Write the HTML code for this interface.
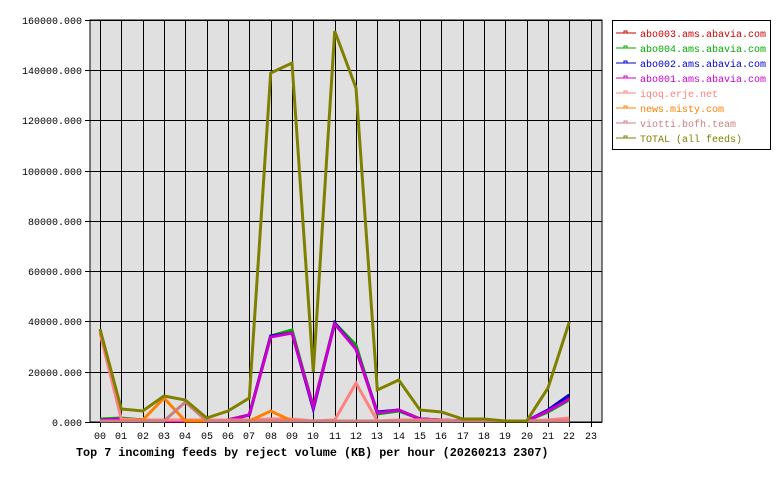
<!DOCTYPE html>
<html><head><meta charset="utf-8"><style>
html,body{margin:0;padding:0;background:#fff;width:780px;height:480px;overflow:hidden}
svg text{font-family:"Liberation Mono","DejaVu Sans Mono",monospace}
</style></head><body>
<svg width="780" height="480" xmlns="http://www.w3.org/2000/svg">
<rect x="90" y="20" width="512" height="402" fill="#e0e0e0" stroke="#000" stroke-width="1"/>
<g stroke="#000" stroke-width="1" shape-rendering="crispEdges">
<line x1="85" y1="20.5" x2="602" y2="20.5"/>
<line x1="85" y1="70.5" x2="602" y2="70.5"/>
<line x1="85" y1="120.5" x2="602" y2="120.5"/>
<line x1="85" y1="171.5" x2="602" y2="171.5"/>
<line x1="85" y1="221.5" x2="602" y2="221.5"/>
<line x1="85" y1="271.5" x2="602" y2="271.5"/>
<line x1="85" y1="321.5" x2="602" y2="321.5"/>
<line x1="85" y1="372.5" x2="602" y2="372.5"/>
<line x1="85" y1="422.5" x2="602" y2="422.5"/>
<line x1="100.5" y1="20" x2="100.5" y2="427"/><line x1="121.5" y1="20" x2="121.5" y2="427"/><line x1="143.5" y1="20" x2="143.5" y2="427"/><line x1="164.5" y1="20" x2="164.5" y2="427"/><line x1="185.5" y1="20" x2="185.5" y2="427"/><line x1="207.5" y1="20" x2="207.5" y2="427"/><line x1="228.5" y1="20" x2="228.5" y2="427"/><line x1="249.5" y1="20" x2="249.5" y2="427"/><line x1="271.5" y1="20" x2="271.5" y2="427"/><line x1="292.5" y1="20" x2="292.5" y2="427"/><line x1="313.5" y1="20" x2="313.5" y2="427"/><line x1="335.5" y1="20" x2="335.5" y2="427"/><line x1="356.5" y1="20" x2="356.5" y2="427"/><line x1="377.5" y1="20" x2="377.5" y2="427"/><line x1="399.5" y1="20" x2="399.5" y2="427"/><line x1="420.5" y1="20" x2="420.5" y2="427"/><line x1="441.5" y1="20" x2="441.5" y2="427"/><line x1="463.5" y1="20" x2="463.5" y2="427"/><line x1="484.5" y1="20" x2="484.5" y2="427"/><line x1="505.5" y1="20" x2="505.5" y2="427"/><line x1="527.5" y1="20" x2="527.5" y2="427"/><line x1="548.5" y1="20" x2="548.5" y2="427"/><line x1="569.5" y1="20" x2="569.5" y2="427"/><line x1="591.5" y1="20" x2="591.5" y2="427"/>
</g>
<g font-size="10" fill="#000" text-anchor="end">
<text x="82" y="24">160000.000</text><text x="82" y="74">140000.000</text><text x="82" y="124">120000.000</text><text x="82" y="175">100000.000</text><text x="82" y="225">80000.000</text><text x="82" y="275">60000.000</text><text x="82" y="325">40000.000</text><text x="82" y="376">20000.000</text><text x="82" y="426">0.000</text>
</g>
<g font-size="10" fill="#000" text-anchor="middle">
<text x="100" y="439">00</text><text x="121" y="439">01</text><text x="143" y="439">02</text><text x="164" y="439">03</text><text x="185" y="439">04</text><text x="207" y="439">05</text><text x="228" y="439">06</text><text x="249" y="439">07</text><text x="271" y="439">08</text><text x="292" y="439">09</text><text x="313" y="439">10</text><text x="335" y="439">11</text><text x="356" y="439">12</text><text x="377" y="439">13</text><text x="399" y="439">14</text><text x="420" y="439">15</text><text x="441" y="439">16</text><text x="463" y="439">17</text><text x="484" y="439">18</text><text x="505" y="439">19</text><text x="527" y="439">20</text><text x="548" y="439">21</text><text x="569" y="439">22</text><text x="591" y="439">23</text>
</g>
<text x="76" y="456" font-size="11.75" font-weight="bold" fill="#000">Top 7 incoming feeds by reject volume (KB) per hour (20260213 2307)</text>
<g fill="none" stroke-width="3" stroke-linejoin="miter">
<polyline stroke="#cc0000" points="100,420 121.3,419 142.7,420 164,421 185.3,421 206.7,421 228,420 249.3,415 270.7,336 292,333 313.3,407 334.7,323 356,349 377.3,413 398.7,410 420,419 441.3,420 462.7,421 484,421 505.3,421 526.7,421 548,411 569.3,398"/>
<polyline stroke="#00aa00" points="100,419 121.3,418 142.7,420 164,421 185.3,421 206.7,421 228,420 249.3,415 270.7,336 292,330 313.3,407 334.7,323 356,345 377.3,414 398.7,411 420,419 441.3,420 462.7,421 484,421 505.3,421 526.7,421 548,412 569.3,400"/>
<polyline stroke="#0000cc" points="100,420 121.3,419 142.7,420 164,421 185.3,421 206.7,421 228,420 249.3,415 270.7,336 292,333 313.3,409 334.7,323 356,349 377.3,412 398.7,410 420,419 441.3,420 462.7,421 484,421 505.3,421 526.7,421 548,410 569.3,395"/>
<polyline stroke="#cc00cc" points="100,420 121.3,419 142.7,420 164,421 185.3,421 206.7,421 228,420 249.3,415 270.7,337 292,333 313.3,407 334.7,324 356,349 377.3,413 398.7,410 420,419 441.3,420 462.7,421 484,421 505.3,421 526.7,421 548,411 569.3,399"/>
<polyline stroke="#ff8080" points="100,333 121.3,419 142.7,420 164,420 185.3,420 206.7,420 228,420 249.3,420 270.7,419 292,419 313.3,421 334.7,420 356,383 377.3,421 398.7,420 420,420 441.3,420 462.7,421 484,421 505.3,421 526.7,421 548,420 569.3,418"/>
<polyline stroke="#ff8000" points="100,421 121.3,421 142.7,420 164,398 185.3,421 206.7,421 228,421 249.3,421 270.7,411 292,421 313.3,421 334.7,421 356,421 377.3,421 398.7,421 420,421 441.3,421 462.7,421 484,421 505.3,421 526.7,421 548,421 569.3,421"/>
<polyline stroke="#cc8080" points="100,421 121.3,421 142.7,421 164,421 185.3,402 206.7,421 228,421 249.3,421 270.7,421 292,421 313.3,421 334.7,421 356,421 377.3,421 398.7,421 420,421 441.3,421 462.7,421 484,421 505.3,421 526.7,421 548,421 569.3,421"/>
<polyline stroke="#808000" points="100,329 121.3,409 142.7,411 164,396 185.3,400 206.7,418 228,411 249.3,398 270.7,73 292,63 313.3,372 334.7,31 356,88 377.3,390 398.7,380 420,410 441.3,412 462.7,419 484,419 505.3,421 526.7,421 548,388 569.3,322"/>
</g>
<rect x="612.5" y="20.5" width="158" height="129" fill="#fff" stroke="#000"/>
<g font-size="10">
<g stroke-width="1" fill="none">
<line x1="616" y1="33" x2="636" y2="33" stroke="#cc0000"/><rect x="624" y="31" width="3" height="2" stroke="#cc0000"/>
<line x1="616" y1="48" x2="636" y2="48" stroke="#00aa00"/><rect x="624" y="46" width="3" height="2" stroke="#00aa00"/>
<line x1="616" y1="63" x2="636" y2="63" stroke="#0000cc"/><rect x="624" y="61" width="3" height="2" stroke="#0000cc"/>
<line x1="616" y1="78" x2="636" y2="78" stroke="#cc00cc"/><rect x="624" y="76" width="3" height="2" stroke="#cc00cc"/>
<line x1="616" y1="93" x2="636" y2="93" stroke="#ff8080"/><rect x="624" y="91" width="3" height="2" stroke="#ff8080"/>
<line x1="616" y1="108" x2="636" y2="108" stroke="#ff8000"/><rect x="624" y="106" width="3" height="2" stroke="#ff8000"/>
<line x1="616" y1="123" x2="636" y2="123" stroke="#cc8080"/><rect x="624" y="121" width="3" height="2" stroke="#cc8080"/>
<line x1="616" y1="138" x2="636" y2="138" stroke="#808000"/><rect x="624" y="136" width="3" height="2" stroke="#808000"/>
</g>
<text x="640" y="37" fill="#cc0000">abo003.ams.abavia.com</text>
<text x="640" y="52" fill="#00aa00">abo004.ams.abavia.com</text>
<text x="640" y="67" fill="#0000cc">abo002.ams.abavia.com</text>
<text x="640" y="82" fill="#cc00cc">abo001.ams.abavia.com</text>
<text x="640" y="97" fill="#ff8080">iqoq.erje.net</text>
<text x="640" y="112" fill="#ff8000">news.misty.com</text>
<text x="640" y="127" fill="#cc8080">viotti.bofh.team</text>
<text x="640" y="142" fill="#808000">TOTAL (all feeds)</text>
</g>
</svg>
</body></html>
